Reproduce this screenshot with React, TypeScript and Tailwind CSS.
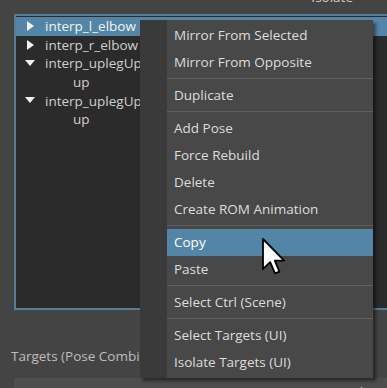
import React from 'react';

type MenuEntry = { label?: string; sep?: boolean; active?: boolean };

const menuItems: MenuEntry[] = [
  { label: 'Mirror From Selected' },
  { label: 'Mirror From Opposite' },
  { sep: true },
  { label: 'Duplicate' },
  { sep: true },
  { label: 'Add Pose' },
  { label: 'Force Rebuild' },
  { label: 'Delete' },
  { label: 'Create ROM Animation' },
  { sep: true },
  { label: 'Copy', active: true },
  { label: 'Paste' },
  { sep: true },
  { label: 'Select Ctrl (Scene)' },
  { sep: true },
  { label: 'Select Targets (UI)' },
  { label: 'Isolate Targets (UI)' },
];

const Arrow = ({ open }: { open: boolean }) =>
  open ? (
    <svg width="10" height="7" viewBox="0 0 10 7" className="ml-[9px] mr-[10px] shrink-0">
      <path d="M0 0 L10 0 L5 6 Z" fill="#f0f0f0" />
    </svg>
  ) : (
    <svg width="7" height="10" viewBox="0 0 7 10" className="ml-[11px] mr-[11px] shrink-0">
      <path d="M0 0 L7 5 L0 10 Z" fill="#f0f0f0" />
    </svg>
  );

const TreeRow = ({ label, open, selected, wrap }: { label: string; open: boolean; selected?: boolean; wrap?: string }) => (
  <div className="leading-[18px]">
    <div className={`flex items-center h-[18.6px] whitespace-nowrap ${selected ? 'bg-[#5285a6] text-[#f4f4f4]' : 'text-[#cfcfcf]'}`}>
      <Arrow open={open} />
      <span>{label}</span>
    </div>
    {wrap && <div className="h-[18.6px] flex items-center pl-[57px] text-[#cfcfcf]">{wrap}</div>}
  </div>
);

// Cursor pointer over the Copy entry
const Cursor = () => (
  <svg width="26" height="40" viewBox="0 0 13 20" className="absolute left-[261px] top-[237px]">
    <path d="M1 1 L1 16 L4.6 12.6 L7 18.2 L9.2 17.3 L6.9 11.8 L11.6 11.8 Z" fill="#ffffff" stroke="#000000" strokeWidth="0.9" strokeLinejoin="round" />
  </svg>
);

const App: React.FC = () => {
  return (
    <div
      className="relative w-[387px] h-[388px] overflow-hidden bg-[#444444] text-[13.5px]"
      style={{ fontFamily: '"Open Sans", "Noto Sans", sans-serif' }}
    >
      {/* top header, mostly scrolled off */}
      <div className="h-[14px] overflow-hidden flex justify-end pr-[34px]">
        <span className="text-[#cfcfcf] leading-[18px] -mt-[12px]">Isolate</span>
      </div>

      {/* pose tree */}
      <div className="pl-[14px]">
        <div className="h-[296px] border-l-2 border-t-2 border-b-2 border-[#5b7b93] bg-[#2b2b2b] pt-[1px]">
          <TreeRow label="interp_l_elbow" open={false} selected />
          <TreeRow label="interp_r_elbow" open={false} />
          <TreeRow label="interp_uplegUp" open wrap="up" />
          <TreeRow label="interp_uplegUp" open wrap="up" />
        </div>
      </div>

      <div className="h-[68px] flex items-end pl-[11px] pb-[12px] text-[#bdbdbd]">Targets (Pose Combinations)</div>

      <div className="ml-[14px] h-[20px] bg-[#4d4d4d] flex justify-end pr-[4px] text-[#cfcfcf] leading-[28px]">Isolate</div>

      {/* context menu */}
      <div className="absolute left-[140px] top-[20px] w-[233px] h-[358px] flex bg-[#484848] shadow-[3px_3px_3px_rgba(0,0,0,0.45)]">
        <div className="w-[27px] bg-[#3a3a3a]" />
        <div className="flex-1 pt-[2px] text-[#dddddd]">
          {menuItems.map((m, i) =>
            m.sep ? (
              <div key={i} className="h-[6px] pt-[2px]">
                <div className="h-px bg-[#5e5e5e]" />
              </div>
            ) : (
              <div key={i} className={`h-[27px] flex items-center pl-[7px] ${m.active ? 'bg-[#5285a6] text-white' : ''}`}>
                {m.label}
              </div>
            )
          )}
        </div>
      </div>

      <Cursor />
    </div>
  );
};

export default App;
